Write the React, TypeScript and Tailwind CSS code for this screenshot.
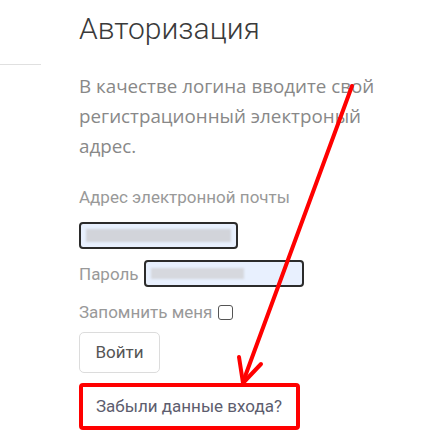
import React from 'react'

const App: React.FC = () => {
    return (
        <div className="relative w-[431px] h-[446px] bg-white overflow-hidden font-['Roboto',sans-serif]">
            <div className="flex">
                {/* sidebar edge */}
                <div className="w-[41px] shrink-0">
                    <div className="h-[65px] border-b border-[#e0e0e0]"></div>
                </div>
                <div className="ml-[38px] flex flex-col">
                    <h1 className="mt-[9px] text-[30px] leading-[40px] font-light text-[#3a3a3a]">
                        Авторизация
                    </h1>
                    <p className="mt-[22px] w-[310px] text-[18.8px] leading-[30px] text-[#888] font-['Open_Sans',sans-serif]">
                        В качестве логина вводите свой регистрационный электроный адрес.
                    </p>
                    <label className="mt-[26px] text-[17px] leading-[20px] text-[#999]">
                        Адрес электронной почты
                    </label>
                    <div className="mt-[15px] w-[159px] h-[27px] rounded-[4px] border-2 border-[#2b2b2b] bg-[#e8f0fe] flex items-center px-[5px]">
                        <div className="w-full h-[13px] bg-[#d2d4da] blur-[1px]"></div>
                    </div>
                    <div className="mt-[11px] flex items-center">
                        <span className="text-[17px] leading-[20px] text-[#999]">Пароль</span>
                        <div className="ml-[5px] w-[160px] h-[27px] rounded-[4px] border-2 border-[#2b2b2b] bg-[#e8f0fe] flex items-center px-[5px]">
                            <div className="w-[93px] h-[11px] bg-[#d6d8de] blur-[1px]"></div>
                        </div>
                    </div>
                    <div className="mt-[15px] flex items-center">
                        <span className="text-[17px] leading-[20px] text-[#999]">Запомнить меня</span>
                        <span className="ml-[6px] w-[15px] h-[15px] rounded-[3px] border border-[#555] bg-white"></span>
                    </div>
                    <button className="mt-[10px] w-[81px] h-[41px] rounded-[5px] border border-[#dcdcdc] bg-white text-[17px] text-[#555]">
                        Войти
                    </button>
                    <div className="mt-[10px] w-[221px] h-[47px] rounded-[4px] border-4 border-[#ff0000] flex items-center pl-[13px]">
                        <span className="text-[17px] text-[#5d5d6e]">Забыли данные входа?</span>
                    </div>
                </div>
            </div>
            {/* annotation arrow */}
            <svg className="absolute left-0 top-0" width="431" height="446" viewBox="0 0 431 446">
                <g stroke="#ff0000" strokeWidth="4" strokeLinecap="round" strokeLinejoin="round" fill="none">
                    <line x1="352" y1="86" x2="243" y2="382" />
                    <polyline points="239,357 243,383 261,364" />
                </g>
            </svg>
        </div>
    )
}

export default App
